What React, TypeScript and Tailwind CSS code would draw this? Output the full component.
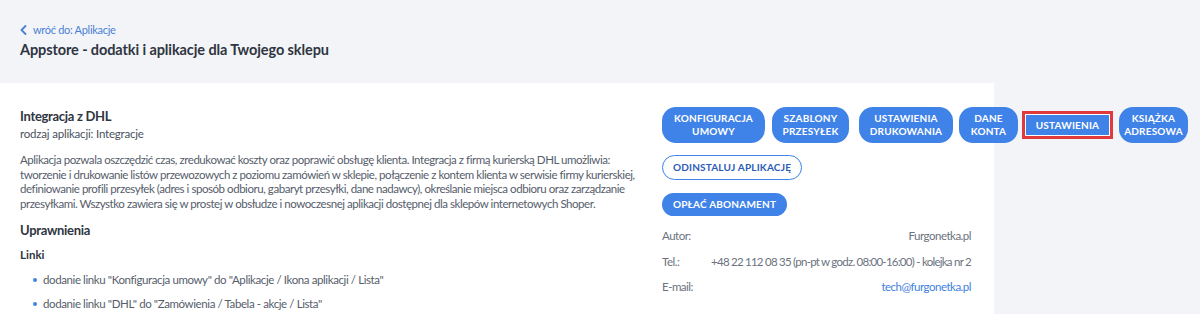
import React from "react";

const font = { fontFamily: "Lato, 'Open Sans', sans-serif" };

function Btn({ children, className = "" }: { children: React.ReactNode; className?: string }) {
  return (
    <div
      className={
        "shrink-0 flex items-center justify-center text-center rounded-[14px] bg-[#3f82e8] text-white text-[10px] font-bold tracking-[0.02em] leading-[13px] px-[10px] h-[36px] " +
        className
      }
    >
      {children}
    </div>
  );
}

export default function App() {
  return (
    <div className="w-[1200px] h-[314px] overflow-hidden bg-[#f3f4f8]" style={font}>
      <div className="px-[20px] pt-[23px] h-[83px]">
        <div className="flex items-center gap-[6px] text-[11px] tracking-[-0.3px] text-[#4a7fd6] leading-[14px]">
          <svg width="7" height="10" viewBox="0 0 7 10" fill="none">
            <path d="M5.5 1L1.5 5l4 4" stroke="#4a7fd6" strokeWidth="1.8" strokeLinecap="round" strokeLinejoin="round" />
          </svg>
          <span>wróć do: Aplikacje</span>
        </div>
        <div className="mt-[3px] text-[14.5px] font-bold tracking-[-0.1px] text-[#2f3541] leading-[20px]">
          Appstore - dodatki i aplikacje dla Twojego sklepu
        </div>
      </div>
      <div className="w-[994px] h-[231px] bg-white flex px-[20px] pt-[24px] gap-[20px]">
        <div className="w-[622px] shrink-0">
          <div className="text-[13px] font-bold tracking-[-0.3px] text-[#2f3541] leading-[18px]">Integracja z DHL</div>
          <div className="text-[11.5px] tracking-[-0.2px] text-[#4b5260] leading-[16px] mt-[1px]">rodzaj aplikacji: Integracje</div>
          <p className="mt-[11px] text-[11.5px] text-[#565d6b] leading-[14.6px] tracking-[-0.45px]">
            Aplikacja pozwala oszczędzić czas, zredukować koszty oraz poprawić obsługę klienta. Integracja z firmą kurierską DHL umożliwia: tworzenie i drukowanie listów przewozowych z poziomu zamówień w sklepie, połączenie z kontem klienta w serwisie firmy kurierskiej, definiowanie profili przesyłek (adres i sposób odbioru, gabaryt przesyłki, dane nadawcy), określanie miejsca odbioru oraz zarządzanie przesyłkami. Wszystko zawiera się w prostej w obsłudze i nowoczesnej aplikacji dostępnej dla sklepów internetowych Shoper.
          </p>
          <div className="mt-[10px] text-[13px] font-bold tracking-[-0.3px] text-[#2f3541] leading-[18px]">Uprawnienia</div>
          <div className="mt-[8px] text-[11.5px] font-bold text-[#2f3541] leading-[16px]">Linki</div>
          <ul className="mt-[9px] pl-[13px] text-[11.5px] tracking-[-0.4px] text-[#565d6b] leading-[16px]">
            <li className="flex items-center gap-[6px]">
              <span className="w-[4px] h-[4px] rounded-full bg-[#3f82e8] inline-block" />
              <span>dodanie linku "Konfiguracja umowy" do "Aplikacje / Ikona aplikacji / Lista"</span>
            </li>
            <li className="flex items-center gap-[6px] mt-[8px]">
              <span className="w-[4px] h-[4px] rounded-full bg-[#3f82e8] inline-block" />
              <span>dodanie linku "DHL" do "Zamówienia / Tabela - akcje / Lista"</span>
            </li>
          </ul>
        </div>
        <div className="w-[312px] shrink-0">
          <div className="flex items-center gap-[6px] whitespace-nowrap">
            <Btn className="w-[103px]">KONFIGURACJA<br />UMOWY</Btn>
            <Btn className="w-[77px] ml-[1px]">SZABLONY<br />PRZESYŁEK</Btn>
            <Btn className="w-[94px] ml-[4px]">USTAWIENIA<br />DRUKOWANIA</Btn>
            <Btn className="w-[59px]">DANE<br />KONTA</Btn>
            <div className="shrink-0 w-[91px] h-[28px] border-[3px] border-[#e0393e] bg-white p-[1px] ml-[-2px]">
              <div className="w-full h-full bg-[#3f82e8] flex items-center justify-center text-white text-[10px] font-bold tracking-[0.02em]">
                USTAWIENIA
              </div>
            </div>
            <Btn className="w-[69px]">KSIĄŻKA<br />ADRESOWA</Btn>
          </div>
          <div className="mt-[12px] w-[140px] h-[25px] rounded-full border-[1.5px] border-[#3f82e8] bg-white flex items-center justify-center text-[10px] font-bold tracking-[0.02em] text-[#2c5cb8]">
            ODINSTALUJ APLIKACJĘ
          </div>
          <div className="mt-[13px] w-[125px] h-[23px] rounded-full bg-[#3f82e8] flex items-center justify-center text-[10px] font-bold tracking-[0.02em] text-white">
            OPŁAĆ ABONAMENT
          </div>
          <div className="mt-[12px] text-[11.5px] text-[#6b7280] leading-[16px] tracking-[-0.5px] whitespace-nowrap">
            <div className="flex justify-between pr-[3px]">
              <span>Autor:</span>
              <span>Furgonetka.pl</span>
            </div>
            <div className="flex justify-between pr-[3px] mt-[9.5px]">
              <span>Tel.:</span>
              <span className="tracking-[-0.75px]">+48 22 112 08 35 (pn-pt w godz. 08:00-16:00) - kolejka nr 2</span>
            </div>
            <div className="flex justify-between pr-[3px] mt-[9.5px]">
              <span>E-mail:</span>
              <span className="text-[#3f7fdf]">tech@furgonetka.pl</span>
            </div>
          </div>
        </div>
      </div>
    </div>
  );
}
